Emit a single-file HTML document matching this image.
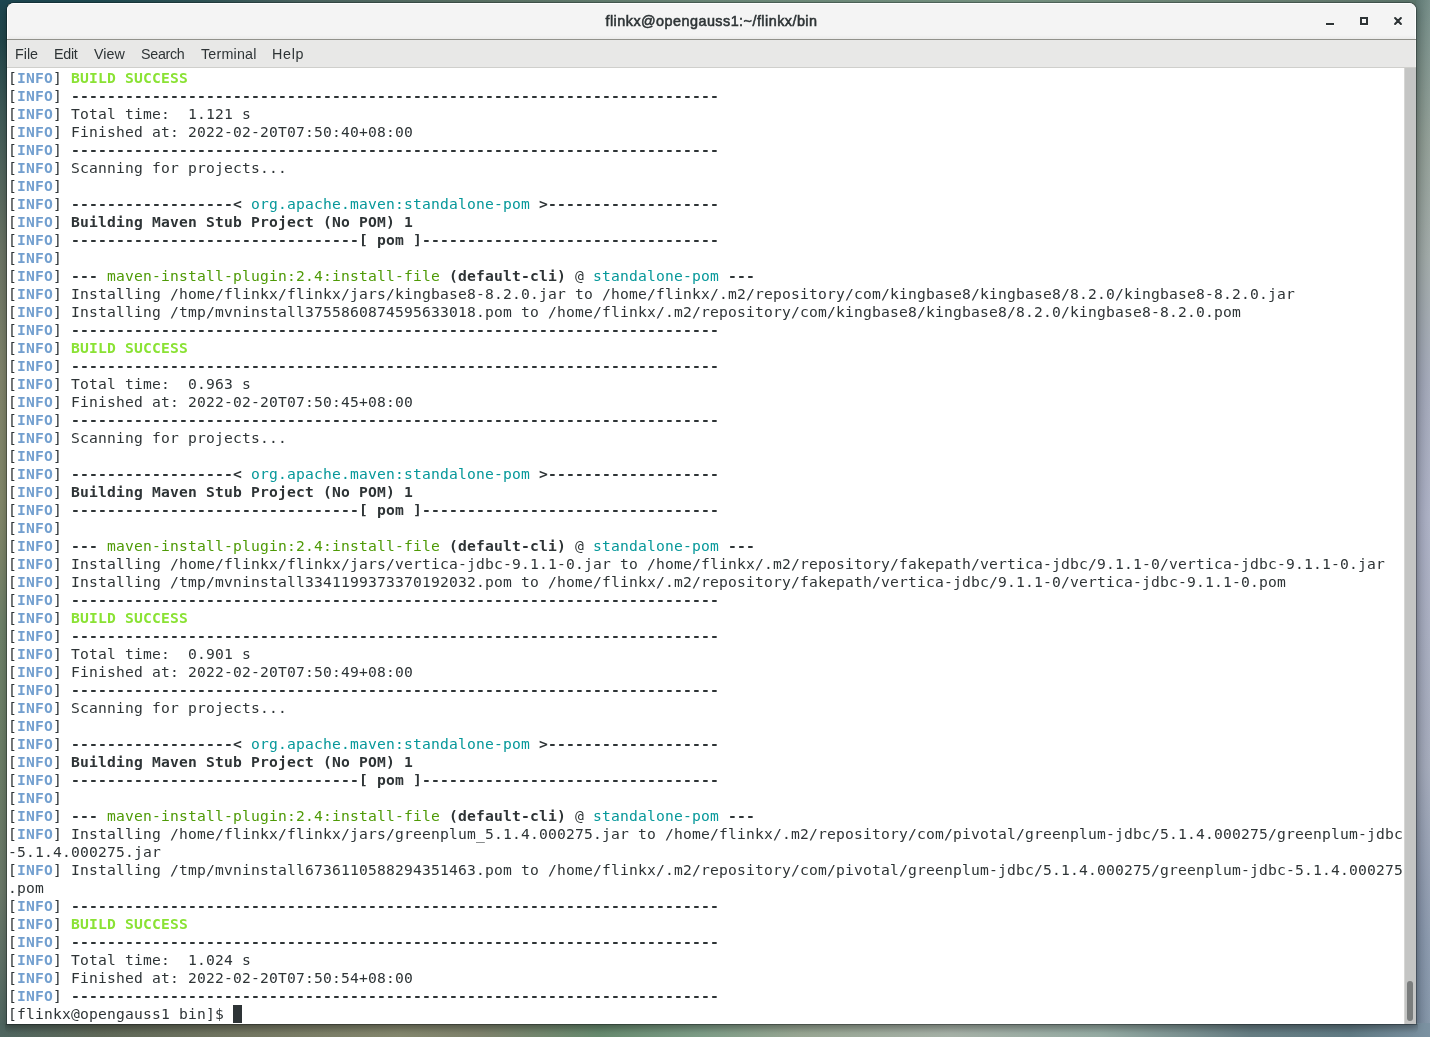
<!DOCTYPE html>
<html lang="en">
<head>
<meta charset="utf-8">
<title>flinkx@opengauss1:~/flinkx/bin</title>
<style>
html,body{margin:0;padding:0;}
body{width:1430px;height:1037px;overflow:hidden;position:relative;background:#6a7a70;font-family:"Liberation Sans","DejaVu Sans",sans-serif;}
#bg{position:absolute;left:0;top:0;width:1430px;height:1037px;}
#bgl{position:absolute;left:0;top:0;width:8px;height:1037px;background:linear-gradient(to bottom,#1d4650 0,#22464a 40px,#3f5a57 112px,#6a7364 250px,#7f836a 375px,#828769 500px,#7b8468 560px,#6d8068 625px,#6b7d66 750px,#6a7868 892px,#5f7066 960px,#4f6660 1030px);}
#bgr{position:absolute;left:1415px;top:0;width:15px;height:1037px;background:linear-gradient(to right,rgba(0,0,0,.09),rgba(255,255,255,.12)),linear-gradient(to bottom,#65807a 0,#86948b 142px,#96a09e 256px,#9aa0b2 382px,#a3a8be 516px,#9aa1b3 766px,#8793a8 882px,#7e8ea4 940px,#768a9e 1037px);}
#bgt{position:absolute;left:0;top:0;width:1416px;height:4px;background:linear-gradient(to right,#1d4650 0,#1f4a50 100px,#2f5355 200px,#4a6460 300px,#5b7265 488px,#6a8777 708px,#779482 1008px,#677d70 1308px,#5c756b 1416px);}
#bgb{position:absolute;left:0;top:1023px;width:1430px;height:14px;background:linear-gradient(to right,#4f6660 0,#5f6858 100px,#747762 250px,#84876d 400px,#7e826c 480px,#668a6e 600px,#7c9c86 700px,#98a693 800px,#a6b1a7 950px,#95aba3 1100px,#667d83 1250px,#607a84 1350px,#7c92a2 1430px);}
#bgbs{position:absolute;left:5px;top:1024px;width:1413px;height:10px;background:linear-gradient(to bottom,rgba(0,0,0,.13),rgba(0,0,0,0));border-radius:0 0 6px 6px;}
#win{position:absolute;left:6px;top:2px;width:1409px;height:1021px;border:1px solid rgba(0,8,10,.29);border-radius:8px 8px 0 0;background:#fff;background-clip:padding-box;overflow:hidden;box-shadow:0 3px 7px rgba(0,0,0,.26);}
#title{position:absolute;left:0;top:0;width:1409px;height:35px;background:linear-gradient(to bottom,#f4f4f4 0,#f4f4f4 31px,#ebebea 35px);border-top:1px solid #fff;border-bottom:1px solid #91918b;box-sizing:content-box;box-shadow:inset 1px 0 0 #fff,inset -1px 0 0 #fff;}
#title .t{will-change:transform;position:absolute;left:0;right:0;top:0;height:35px;line-height:35px;text-align:center;font-family:"Liberation Sans","DejaVu Sans",sans-serif;font-weight:normal;font-size:14.4px;letter-spacing:0.46px;-webkit-text-stroke:0.55px #2e3436;color:#2e3436;}
#menu{position:absolute;left:0;top:37px;width:1409px;height:27px;background:#e8e8e7;border-bottom:1px solid #cfcfcc;box-shadow:inset 1px 0 0 #f1f1ef,inset -1px 0 0 #f1f1ef;}
#menu span{will-change:transform;position:absolute;top:0.6px;line-height:27px;font-size:14.3px;color:#2e3436;font-family:"Liberation Sans","DejaVu Sans",sans-serif;}
#term{position:absolute;left:0;top:65px;width:1397px;height:956px;background:#fff;}
#rows{will-change:transform;position:absolute;left:1px;top:1px;font-family:"DejaVu Sans Mono","Liberation Mono",monospace;font-size:14.67px;letter-spacing:0.1761px;color:#2e3436;}
.r{height:18px;line-height:18px;white-space:pre;}
.r b{font-weight:bold;}
.i{color:#729fcf;}
.g{color:#8ae234;}
.c{color:#06989a;}
.gr{color:#4e9a06;}
.cur{display:inline-block;width:9px;height:18px;background:#2e3436;vertical-align:top;}
#sb{position:absolute;left:1397px;top:65px;width:12px;height:956px;background:#c4c5c4;border-left:1px solid #d6d6d4;box-sizing:border-box;}
#thumb{position:absolute;left:2px;top:913px;width:6px;height:40px;border-radius:3px;background:#7a7d7d;}
.wb{position:absolute;}
</style>
</head>
<body>
<div id="bg"><div id="bgl"></div><div id="bgr"></div><div id="bgt"></div><div id="bgb"></div><div id="bgbs"></div></div>
<div id="win">
  <div id="title"><div class="t">flinkx@opengauss1:~/flinkx/bin</div>
  <svg class="wb" style="left:1310px;top:4px" width="100" height="26" viewBox="0 0 100 26">
    <g transform="translate(0,1)" opacity=".85">
    <rect x="9" y="15" width="8" height="2" fill="#fff"/>
    <rect x="44" y="10" width="6" height="6" fill="none" stroke="#fff" stroke-width="2"/>
    <path d="M78.1 10.1 L83.9 15.9 M83.9 10.1 L78.1 15.9" stroke="#fff" stroke-width="2.1" stroke-linecap="round"/>
    </g>
    <rect x="9" y="15" width="8" height="2" fill="#2e3436"/>
    <rect x="44" y="10" width="6" height="6" fill="none" stroke="#2e3436" stroke-width="2"/>
    <path d="M78.1 10.1 L83.9 15.9 M83.9 10.1 L78.1 15.9" stroke="#2e3436" stroke-width="2.1" stroke-linecap="round"/>
  </svg>
  </div>
  <div id="menu"><span style="left:7.6px">File</span><span style="left:46.8px;letter-spacing:-0.3px">Edit</span><span style="left:87px">View</span><span style="left:134.2px;letter-spacing:-0.3px">Search</span><span style="left:193.8px;letter-spacing:0.2px">Terminal</span><span style="left:264.6px;letter-spacing:0.7px">Help</span></div>
  <div id="term"><div id="rows">
<div class="r">[<b class="i">INFO</b>] <b class="g">BUILD SUCCESS</b></div>
<div class="r">[<b class="i">INFO</b>] <b>------------------------------------------------------------------------</b></div>
<div class="r">[<b class="i">INFO</b>] Total time:  1.121 s</div>
<div class="r">[<b class="i">INFO</b>] Finished at: 2022-02-20T07:50:40+08:00</div>
<div class="r">[<b class="i">INFO</b>] <b>------------------------------------------------------------------------</b></div>
<div class="r">[<b class="i">INFO</b>] Scanning for projects...</div>
<div class="r">[<b class="i">INFO</b>]</div>
<div class="r">[<b class="i">INFO</b>] <b>------------------&lt; </b><span class="c">org.apache.maven:standalone-pom</span><b> &gt;-------------------</b></div>
<div class="r">[<b class="i">INFO</b>] <b>Building Maven Stub Project (No POM) 1</b></div>
<div class="r">[<b class="i">INFO</b>] <b>--------------------------------[ pom ]---------------------------------</b></div>
<div class="r">[<b class="i">INFO</b>]</div>
<div class="r">[<b class="i">INFO</b>] <b>---</b> <span class="gr">maven-install-plugin:2.4:install-file</span> <b>(default-cli)</b> @ <span class="c">standalone-pom</span> <b>---</b></div>
<div class="r">[<b class="i">INFO</b>] Installing /home/flinkx/flinkx/jars/kingbase8-8.2.0.jar to /home/flinkx/.m2/repository/com/kingbase8/kingbase8/8.2.0/kingbase8-8.2.0.jar</div>
<div class="r">[<b class="i">INFO</b>] Installing /tmp/mvninstall3755860874595633018.pom to /home/flinkx/.m2/repository/com/kingbase8/kingbase8/8.2.0/kingbase8-8.2.0.pom</div>
<div class="r">[<b class="i">INFO</b>] <b>------------------------------------------------------------------------</b></div>
<div class="r">[<b class="i">INFO</b>] <b class="g">BUILD SUCCESS</b></div>
<div class="r">[<b class="i">INFO</b>] <b>------------------------------------------------------------------------</b></div>
<div class="r">[<b class="i">INFO</b>] Total time:  0.963 s</div>
<div class="r">[<b class="i">INFO</b>] Finished at: 2022-02-20T07:50:45+08:00</div>
<div class="r">[<b class="i">INFO</b>] <b>------------------------------------------------------------------------</b></div>
<div class="r">[<b class="i">INFO</b>] Scanning for projects...</div>
<div class="r">[<b class="i">INFO</b>]</div>
<div class="r">[<b class="i">INFO</b>] <b>------------------&lt; </b><span class="c">org.apache.maven:standalone-pom</span><b> &gt;-------------------</b></div>
<div class="r">[<b class="i">INFO</b>] <b>Building Maven Stub Project (No POM) 1</b></div>
<div class="r">[<b class="i">INFO</b>] <b>--------------------------------[ pom ]---------------------------------</b></div>
<div class="r">[<b class="i">INFO</b>]</div>
<div class="r">[<b class="i">INFO</b>] <b>---</b> <span class="gr">maven-install-plugin:2.4:install-file</span> <b>(default-cli)</b> @ <span class="c">standalone-pom</span> <b>---</b></div>
<div class="r">[<b class="i">INFO</b>] Installing /home/flinkx/flinkx/jars/vertica-jdbc-9.1.1-0.jar to /home/flinkx/.m2/repository/fakepath/vertica-jdbc/9.1.1-0/vertica-jdbc-9.1.1-0.jar</div>
<div class="r">[<b class="i">INFO</b>] Installing /tmp/mvninstall3341199373370192032.pom to /home/flinkx/.m2/repository/fakepath/vertica-jdbc/9.1.1-0/vertica-jdbc-9.1.1-0.pom</div>
<div class="r">[<b class="i">INFO</b>] <b>------------------------------------------------------------------------</b></div>
<div class="r">[<b class="i">INFO</b>] <b class="g">BUILD SUCCESS</b></div>
<div class="r">[<b class="i">INFO</b>] <b>------------------------------------------------------------------------</b></div>
<div class="r">[<b class="i">INFO</b>] Total time:  0.901 s</div>
<div class="r">[<b class="i">INFO</b>] Finished at: 2022-02-20T07:50:49+08:00</div>
<div class="r">[<b class="i">INFO</b>] <b>------------------------------------------------------------------------</b></div>
<div class="r">[<b class="i">INFO</b>] Scanning for projects...</div>
<div class="r">[<b class="i">INFO</b>]</div>
<div class="r">[<b class="i">INFO</b>] <b>------------------&lt; </b><span class="c">org.apache.maven:standalone-pom</span><b> &gt;-------------------</b></div>
<div class="r">[<b class="i">INFO</b>] <b>Building Maven Stub Project (No POM) 1</b></div>
<div class="r">[<b class="i">INFO</b>] <b>--------------------------------[ pom ]---------------------------------</b></div>
<div class="r">[<b class="i">INFO</b>]</div>
<div class="r">[<b class="i">INFO</b>] <b>---</b> <span class="gr">maven-install-plugin:2.4:install-file</span> <b>(default-cli)</b> @ <span class="c">standalone-pom</span> <b>---</b></div>
<div class="r">[<b class="i">INFO</b>] Installing /home/flinkx/flinkx/jars/greenplum_5.1.4.000275.jar to /home/flinkx/.m2/repository/com/pivotal/greenplum-jdbc/5.1.4.000275/greenplum-jdbc</div>
<div class="r">-5.1.4.000275.jar</div>
<div class="r">[<b class="i">INFO</b>] Installing /tmp/mvninstall6736110588294351463.pom to /home/flinkx/.m2/repository/com/pivotal/greenplum-jdbc/5.1.4.000275/greenplum-jdbc-5.1.4.000275</div>
<div class="r">.pom</div>
<div class="r">[<b class="i">INFO</b>] <b>------------------------------------------------------------------------</b></div>
<div class="r">[<b class="i">INFO</b>] <b class="g">BUILD SUCCESS</b></div>
<div class="r">[<b class="i">INFO</b>] <b>------------------------------------------------------------------------</b></div>
<div class="r">[<b class="i">INFO</b>] Total time:  1.024 s</div>
<div class="r">[<b class="i">INFO</b>] Finished at: 2022-02-20T07:50:54+08:00</div>
<div class="r">[<b class="i">INFO</b>] <b>------------------------------------------------------------------------</b></div>
<div class="r">[flinkx@opengauss1 bin]$ <span class="cur"></span></div>
</div></div>
  <div id="sb"><div id="thumb"></div></div>
</div>
</body>
</html>
